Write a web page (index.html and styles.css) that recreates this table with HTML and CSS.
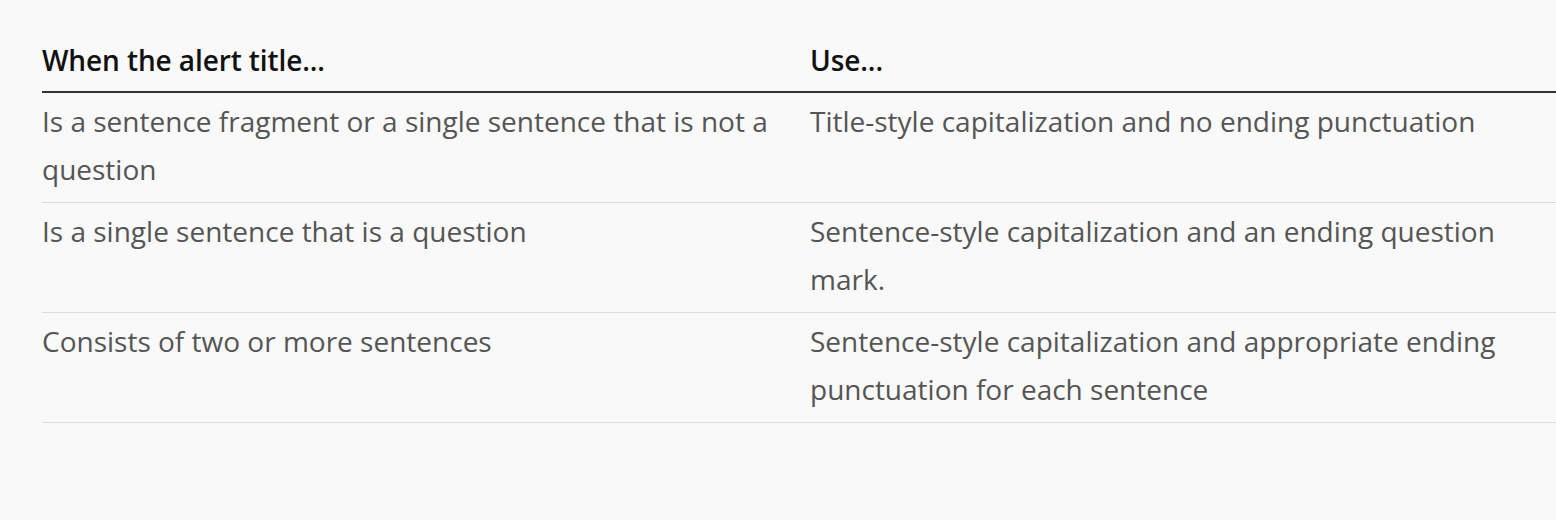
FILE: index.html
```html
<!DOCTYPE html>
<html lang="en">
<head>
<meta charset="utf-8">
<link rel="stylesheet" href="styles.css">
</head>
<body>
<main class="page">
  <table class="guide">
    <thead>
      <tr>
        <th class="col">When the alert title...</th>
        <th class="col">Use...</th>
      </tr>
    </thead>
    <tbody>
      <tr>
        <td>Is a sentence fragment or a single sentence that is not a question</td>
        <td>Title-style capitalization and no ending punctuation</td>
      </tr>
      <tr>
        <td>Is a single sentence that is a question</td>
        <td>Sentence-style capitalization and an ending question mark.</td>
      </tr>
      <tr>
        <td>Consists of two or more sentences</td>
        <td>Sentence-style capitalization and appropriate ending punctuation for each sentence</td>
      </tr>
    </tbody>
  </table>
</main>
</body>
</html>
```
FILE: styles.css
```css
html, body {
  margin: 0;
  padding: 0;
  overflow: hidden;
  background: #f9f9f9;
}
.page {
  padding: 30px 0 0 42px;
  font-family: "Open Sans", "Liberation Sans", sans-serif;
}
.guide {
  width: 1536px;
  border-collapse: collapse;
  table-layout: fixed;
}
.guide th,
.guide td {
  text-align: left;
  vertical-align: top;
  font-size: 28px;
  line-height: 48px;
  padding: 4px 24px 9px 0;
}
.guide th {
  color: #111;
  font-weight: 600;
  letter-spacing: -0.1px;
  padding-top: 6px;
  padding-bottom: 7px;
  border-bottom: 2px solid #333;
}
.guide td {
  color: #555;
  font-weight: 400;
  letter-spacing: 0;
  border-bottom: 1px solid #dcdcdc;
}
```
